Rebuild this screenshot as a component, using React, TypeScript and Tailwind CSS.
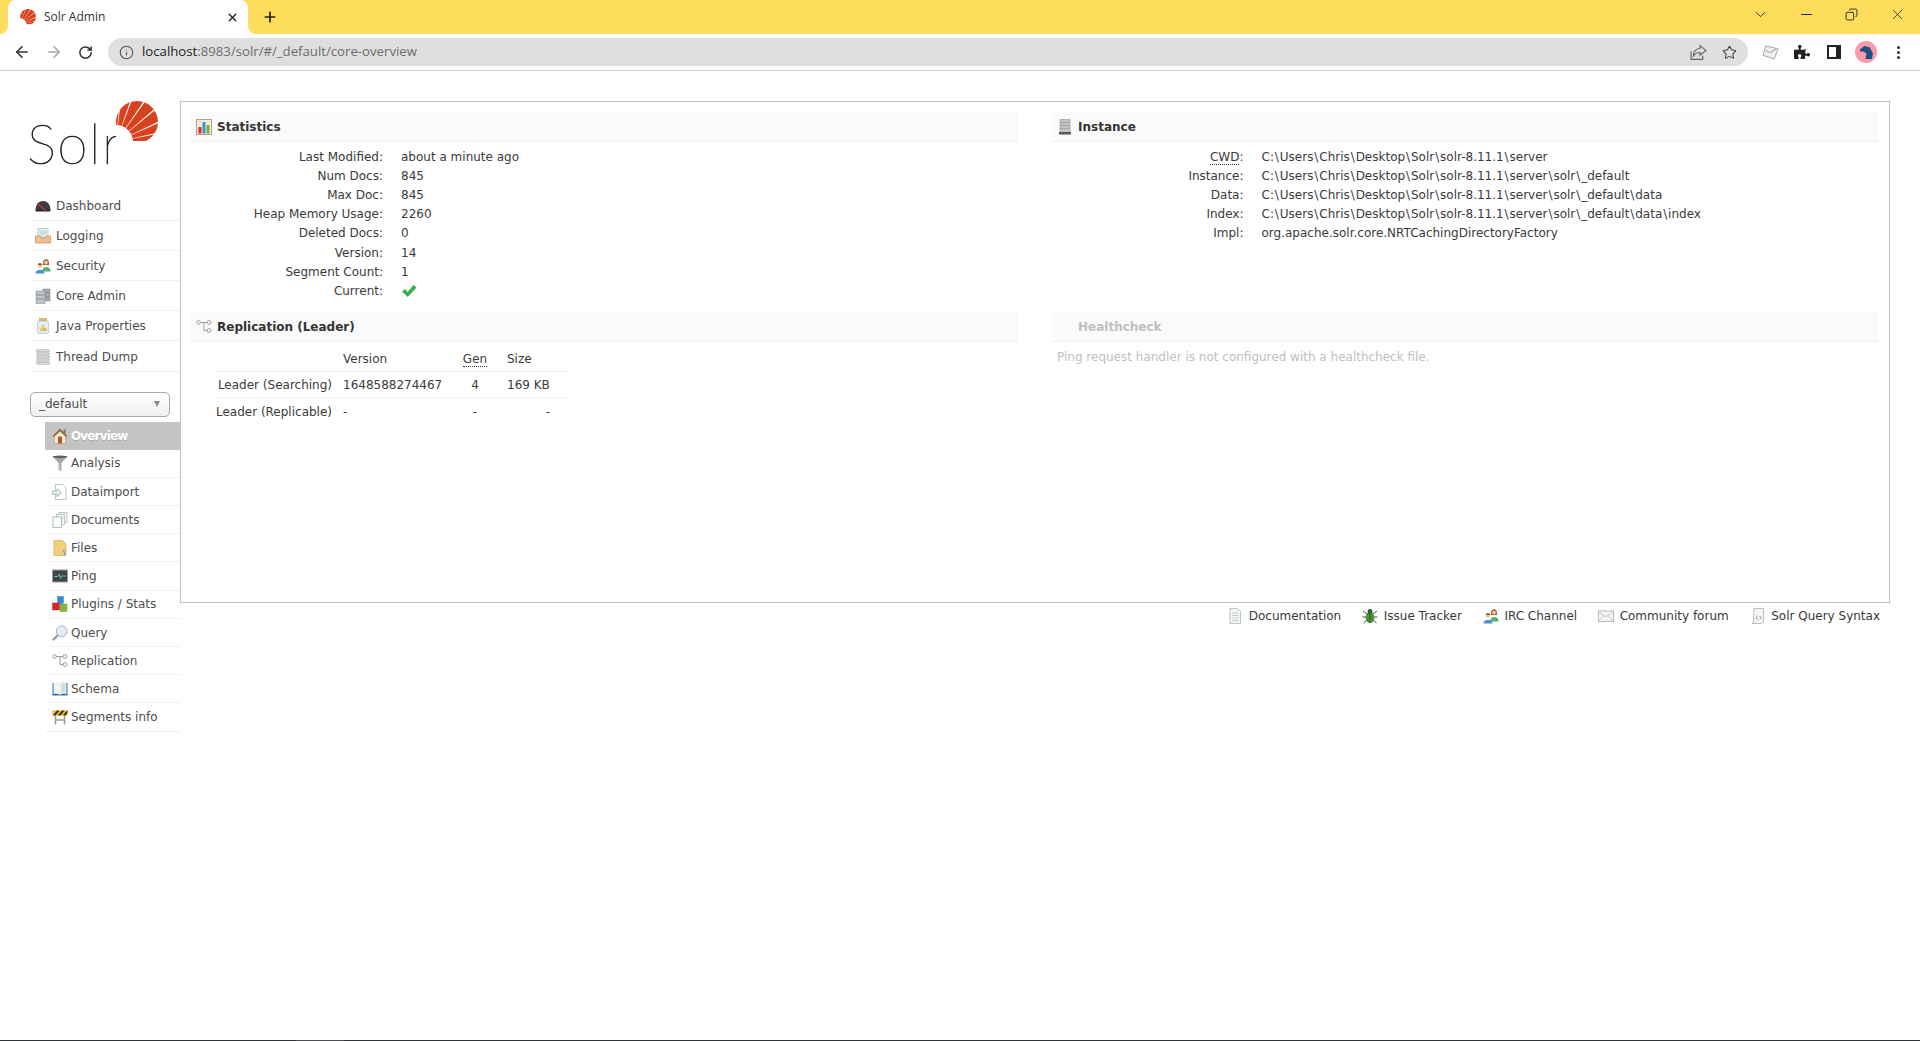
import React from "react";
import { ArrowLeft, ArrowRight, RotateCw, Info, Star, Plus, X, ChevronDown, Minus, Copy } from "lucide-react";
import { FaPuzzlePiece } from "react-icons/fa";

const Svg = ({ children, className = "" }: { children: React.ReactNode; className?: string }) => (
  <svg viewBox="0 0 16 16" width={16} height={16} className={"shrink-0 " + className}>{children}</svg>
);

const rays = (fx: number, fy: number, len: number, angs: number[], w: number) =>
  angs.map((a) => {
    const r1 = ((a - w) * Math.PI) / 180, r2 = ((a + w) * Math.PI) / 180;
    return `${fx},${fy} ${fx + len * Math.cos(r1)},${fy - len * Math.sin(r1)} ${fx + len * Math.cos(r2)},${fy - len * Math.sin(r2)}`;
  });

const Sun = ({ size, className = "" }: { size: number; className?: string }) => (
  <svg viewBox="0 0 42 42" width={size} height={size} className={className}>
    <circle cx="21" cy="21" r="21" fill="#d9411e" />
    <circle cx="0" cy="41" r="17" fill="#fff" />
    <polygon points="-1,0 -1,42 42,42 36,40 0,40 0,14 4,8 0,0" fill="#fff" />
    {rays(0, 41, 70, [84, 70, 55, 40, 25, 12, 1], 0.85).map((p) => (
      <polygon key={p} points={p} fill="#fff" />
    ))}
  </svg>
);

const Dashboard = () => (
  <Svg><path d="M0.5 12.5 C0.5 6 4 3 8 3 S15.5 6 15.5 12.5 Z" fill="#3a3d42" /><rect x="0.5" y="11.5" width="15" height="2" rx="1" fill="#26282b" /><path d="M2.5 5.5 L11 13" stroke="#e02b2b" strokeWidth="1.1" /></Svg>
);
const Logging = () => (
  <Svg>
    <rect x="3" y="0.5" width="10" height="9" fill="#e8f2f2" stroke="#9fb3b5" strokeWidth=".6" />
    <path d="M4.5 3h7M4.5 5h7M4.5 7h5" stroke="#8fbfc4" strokeWidth=".7" />
    <path d="M0.5 8 H5 L6 10 H10 L11 8 H15.5 V15 H0.5 Z" fill="#f2c08f" stroke="#c98a4e" strokeWidth=".7" />
  </Svg>
);
const People = () => (
  <Svg>
    <path d="M8.3 3.5 C8.5 0.5 13.5 0.5 13.7 3.5 L14 7 H8Z" fill="#9a4f24" /><circle cx="11" cy="4.5" r="2" fill="#efc79b" />
    <path d="M7.5 12 C7.5 8 14.5 8 15.5 12 V13.5 H7.5Z" fill="#55b07a" />
    <circle cx="5" cy="7.5" r="2.4" fill="#f0c8a0" /><path d="M2.7 7 C3 4.6 7 4.6 7.3 7Z" fill="#7a5a3a" />
    <path d="M0.5 15.5 C0.5 10.5 9.5 10.5 9.5 15.5Z" fill="#4f8fd0" />
  </Svg>
);
const CoreAdmin = () => (
  <Svg>
    <rect x="8" y="1" width="7" height="12" fill="#a8adb0" stroke="#7c8184" strokeWidth=".5" />
    <rect x="1" y="3" width="9" height="12.5" fill="#c2c6c8" stroke="#7c8184" strokeWidth=".5" />
    <path d="M1 7h9M1 11h9M10 5h5M10 9h5" stroke="#70767a" strokeWidth=".7" />
  </Svg>
);
const Jar = () => (
  <Svg>
    <rect x="4.5" y="0.5" width="7" height="2.5" fill="#e6c268" stroke="#b99440" strokeWidth=".5" />
    <rect x="2.5" y="3" width="11" height="12.5" rx="1.5" fill="#e6eff4" stroke="#a3b7c4" strokeWidth=".6" />
    <circle cx="6.5" cy="11.5" r="2" fill="#e8c272" /><circle cx="9.8" cy="11.5" r="2" fill="#dcb35f" /><circle cx="8" cy="8.8" r="2" fill="#eccd85" />
  </Svg>
);
const ThreadDump = () => (
  <Svg>
    {[0.8, 3.9, 7, 10.1, 13.2].map((y) => <rect key={y} x="1.5" y={y} width="13" height="2" rx="1" fill="#ececec" stroke="#9b9d9d" strokeWidth=".7" />)}
  </Svg>
);
const House = () => (
  <Svg>
    <path d="M8 0.5 L0.5 8 L2 9 L8 3.5 L14 9 L15.5 8 L13.5 6 V1.5 H11.5 V4 Z" fill="#9a6a3a" />
    <path d="M2.5 8.5 L8 3.5 L13.5 8.5 V15.5 H2.5Z" fill="#f6ecd7" stroke="#a98656" strokeWidth=".5" />
    <rect x="6" y="8.5" width="4" height="7" fill="#b45a25" />
  </Svg>
);
const Funnel = () => (
  <Svg><path d="M0.5 1 H15.5 L9.5 8 V15.5 H6.5 V8 Z" fill="#a3a5a7" /><ellipse cx="8" cy="1.8" rx="7.5" ry="1.2" fill="#5c5e60" /><path d="M7.2 8v7" stroke="#dfe1e2" strokeWidth=".9" /></Svg>
);
const DocImport = () => (
  <Svg>
    <path d="M3.5 0.5 H10.5 L14 4 V15.5 H3.5Z" fill="#fff" stroke="#a2b3b0" strokeWidth=".7" />
    <path d="M0.5 7 H5 V4.8 L9.5 8.8 L5 12.8 V10.6 H0.5Z" fill="#e3efe6" stroke="#8fa89b" strokeWidth=".7" />
  </Svg>
);
const Documents = () => (
  <Svg>
    <rect x="7" y="0.5" width="8" height="10" fill="#eef4f4" stroke="#9fb0b2" strokeWidth=".6" />
    <rect x="4.5" y="2.5" width="8" height="10" fill="#f2f7f7" stroke="#9fb0b2" strokeWidth=".6" />
    <rect x="1" y="5" width="8.5" height="10.5" fill="#fff" stroke="#8ba0a3" strokeWidth=".7" />
    <path d="M10.5 4.5h1M10.5 6.5h1" stroke="#aaa" strokeWidth=".6" />
  </Svg>
);
const Files = () => (
  <Svg><path d="M2 0.5 H10.5 L14 4 V15.5 H2Z" fill="#f1cf7c" stroke="#c9a24f" strokeWidth=".6" /><path d="M11.5 10 L13 15" stroke="#5aa3d8" strokeWidth="1.2" /></Svg>
);
const Ping = () => (
  <Svg>
    <rect x="0.5" y="2" width="15" height="12" fill="#3d4347" stroke="#9a9fa2" strokeWidth="1" />
    <path d="M2 8.5 H6 L7 6 L8.5 10.5 L9.5 8 H14" stroke="#5fe3b8" strokeWidth=".8" fill="none" />
  </Svg>
);
const Plugins = () => (
  <Svg>
    <rect x="5.5" y="0.5" width="6" height="7" fill="#2e8fd8" stroke="#1d6ea8" strokeWidth=".4" />
    <rect x="0.5" y="7" width="7" height="7" fill="#d9242b" stroke="#a81b20" strokeWidth=".4" />
    <rect x="8" y="8" width="7" height="7.5" fill="#84b83c" stroke="#64922a" strokeWidth=".4" />
  </Svg>
);
const Query = () => (
  <Svg>
    <path d="M6 10 L1.5 14.5" stroke="#9b9b9b" strokeWidth="2.4" strokeLinecap="round" />
    <circle cx="9.7" cy="6.3" r="5.3" fill="#e4eef6" stroke="#a7b1ba" strokeWidth="1" />
  </Svg>
);
const Replication = () => (
  <Svg>
    <g fill="#fff" stroke="#9a9a9a" strokeWidth="1">
      <path d="M4 3.5 H11" fill="none" /><path d="M8 3.5 V11.5 H11.5" fill="none" />
      <circle cx="2.5" cy="3.5" r="1.8" /><circle cx="13" cy="3.5" r="1.9" /><circle cx="13" cy="11.5" r="1.9" />
    </g>
  </Svg>
);
const Schema = () => (
  <Svg>
    <path d="M0.5 2 V14.5 H15.5 V2" fill="#2d6fb0" />
    <path d="M1.5 1 C4 0.5 7 1 8 2 V14 C7 13 4 12.6 1.5 13Z" fill="#eef5f2" />
    <path d="M14.5 1 C12 0.5 9 1 8 2 V14 C9 13 12 12.6 14.5 13Z" fill="#e2efe9" />
    <path d="M9.5 4h3.5M9.5 6h3.5M9.5 8h3.5M9.5 10h3.5" stroke="#9fc0b4" strokeWidth=".7" />
  </Svg>
);
const Segments = () => (
  <Svg>
    <rect x="0.5" y="1.5" width="15" height="5" fill="#f1b51c" />
    <path d="M1 6.5 L5 1.5 H7.5 L3.5 6.5Z M6 6.5 L10 1.5 H12.5 L8.5 6.5Z M11 6.5 L15 1.5 H15.5 V3.5 L13.5 6.5Z" fill="#2b2b2b" />
    <path d="M3.5 6.5 V15.5 M12.5 6.5 V15.5 M3.5 11h9" stroke="#9a9a8e" strokeWidth="1.5" />
  </Svg>
);
const Chart = () => (
  <Svg>
    <rect x="0.5" y="0.5" width="15" height="15" fill="#f3e9da" stroke="#a48c6d" strokeWidth=".8" />
    <rect x="2.5" y="8" width="3" height="6.5" fill="#dc2a2a" /><rect x="6.5" y="3" width="3" height="11.5" fill="#3a94cf" /><rect x="10.5" y="6" width="3" height="8.5" fill="#75b13a" />
  </Svg>
);
const Tower = () => (
  <Svg>
    <rect x="3" y="0.5" width="10" height="13" fill="#c2c4c5" stroke="#8a8c8d" strokeWidth=".5" />
    <path d="M3 3.5h10M3 6.5h10M3 9.5h10" stroke="#9b9d9e" strokeWidth=".8" />
    <rect x="2" y="13" width="12" height="2.5" fill="#56595a" />
  </Svg>
);
const Check = () => (
  <Svg><path d="M1 8.5 L4 6 L6.5 9 L12.5 2 L15.5 4.5 L6.8 14 Z" fill="#35b144" /></Svg>
);
const Doc = () => (
  <Svg>
    <path d="M3 0.5 H10.5 L13.5 3.5 V15.5 H3Z" fill="#f2f5f5" stroke="#a3aeb0" strokeWidth=".7" />
    <path d="M5 5h6.5M5 7.5h6.5M5 10h6.5M5 12.5h6.5" stroke="#b3bcbe" strokeWidth=".7" />
  </Svg>
);
const Bug = () => (
  <Svg>
    <path d="M1 3 L5 6 M15 3 L11 6 M0.5 9 H4 M15.5 9 H12 M1.5 15 L5 12 M14.5 15 L11 12" stroke="#3c5a30" strokeWidth="1" />
    <ellipse cx="8" cy="9.5" rx="4.3" ry="5.8" fill="#4f8f3a" /><circle cx="8" cy="3.5" r="2.4" fill="#31622a" /><path d="M8 4v11" stroke="#2b5424" strokeWidth=".7" />
  </Svg>
);
const Mail = () => (
  <Svg>
    <rect x="0.5" y="3" width="15" height="10.5" fill="#f3f5f5" stroke="#a6acad" strokeWidth=".8" />
    <path d="M0.5 3.5 L8 9 L15.5 3.5 M0.5 13.5 L6 7.5 M15.5 13.5 L10 7.5" stroke="#b3b8b9" strokeWidth=".7" fill="none" />
  </Svg>
);
const Scroll = () => (
  <Svg>
    <path d="M4 0.5 H13.5 V13 C13.5 14.5 12 15.5 11 15.5 H2 C3 15 3.5 14 3.5 13 Z" fill="#f4f6f6" stroke="#9aa3a4" strokeWidth=".7" />
    <path d="M7.5 8 L5.8 9.7 L7.5 11.4 M9.5 8 L11.2 9.7 L9.5 11.4" stroke="#6f787a" strokeWidth=".8" fill="none" />
  </Svg>
);

const mainNav: [string, React.FC][] = [
  ["Dashboard", Dashboard], ["Logging", Logging], ["Security", People],
  ["Core Admin", CoreAdmin], ["Java Properties", Jar], ["Thread Dump", ThreadDump],
];
const coreNav: [string, React.FC][] = [
  ["Analysis", Funnel], ["Dataimport", DocImport], ["Documents", Documents], ["Files", Files],
  ["Ping", Ping], ["Plugins / Stats", Plugins], ["Query", Query], ["Replication", Replication],
  ["Schema", Schema], ["Segments info", Segments],
];
const stats: [string, React.ReactNode][] = [
  ["Last Modified:", "about a minute ago"], ["Num Docs:", "845"], ["Max Doc:", "845"],
  ["Heap Memory Usage:", "2260"], ["Deleted Docs:", "0"], ["Version:", "14"], ["Segment Count:", "1"],
  ["Current:", <Check />],
];

// The reference font draws the backslash wider than DejaVu does.
const Path = ({ value }: { value: string }) => (
  <>
    {value.split("\\").map((part, i) => (
      <React.Fragment key={i}>
        {i > 0 && <span className="px-[0.92px]">\</span>}
        {part}
      </React.Fragment>
    ))}
  </>
);

const instance: [React.ReactNode, React.ReactNode][] = [
  [<><span className="border-b border-dotted border-[#333]">CWD</span>:</>, <Path value={"C:\\Users\\Chris\\Desktop\\Solr\\solr-8.11.1\\server"} />],
  ["Instance:", <Path value={"C:\\Users\\Chris\\Desktop\\Solr\\solr-8.11.1\\server\\solr\\_default"} />],
  ["Data:", <Path value={"C:\\Users\\Chris\\Desktop\\Solr\\solr-8.11.1\\server\\solr\\_default\\data"} />],
  ["Index:", <Path value={"C:\\Users\\Chris\\Desktop\\Solr\\solr-8.11.1\\server\\solr\\_default\\data\\index"} />],
  ["Impl:", "org.apache.solr.core.NRTCachingDirectoryFactory"],
];
const footer: [string, React.FC][] = [
  ["Documentation", Doc], ["Issue Tracker", Bug], ["IRC Channel", People], ["Community forum", Mail], ["Solr Query Syntax", Scroll],
];

const BlockHead = ({ icon, title, muted }: { icon?: React.ReactNode; title: string; muted?: boolean }) => (
  <div className={"h-[30px] flex items-center gap-[5px] pl-[5px] bg-[#fafafa] border-b border-[#f0f0f0] font-bold text-[12px] " + (muted ? "text-[#c0c0c0]" : "text-[#333]")}>
    <span className="w-[16px] h-[16px] flex shrink-0">{icon}</span>
    <span>{title}</span>
  </div>
);

const KV = ({ label, value, w }: { label: React.ReactNode; value: React.ReactNode; w: string }) => (
  <div className="h-[19.2px] flex items-center">
    <div className={"text-right shrink-0 leading-[15px] " + w}>{label}</div>
    <div className="ml-[18px] leading-[15px]">{value}</div>
  </div>
);

export default function App() {
  return (
    <div className="relative w-[1920px] h-[1041px] overflow-hidden flex flex-col bg-white text-[12px] text-[#3a3a3a] font-['DejaVu_Sans',sans-serif]">
      {/* tab strip */}
      <div className="h-[34px] bg-[#ffdd5c] flex items-center shrink-0 font-['Open_Sans',sans-serif]">
        <div className="relative ml-[8px] w-[240px] h-[34px] bg-white rounded-t-[8px] flex items-center pl-[12px]">
          <svg viewBox="0 0 8 8" width={8} height={8} className="absolute -left-[8px] bottom-0"><path d="M8 0 V8 H0 A8 8 0 0 0 8 0Z" fill="#fff" /></svg>
          <svg viewBox="0 0 8 8" width={8} height={8} className="absolute -right-[8px] bottom-0"><path d="M0 0 V8 H8 A8 8 0 0 1 0 0Z" fill="#fff" /></svg>
          <Sun size={16} />
          <span className="ml-[8px] text-[12px] text-[#333]">Solr Admin</span>
          <X className="ml-auto mr-[9px] text-[#222]" size={13} strokeWidth={2.6} />
        </div>
        <Plus className="ml-[14px] text-[#222]" size={16} strokeWidth={2.6} />
        <div className="ml-auto flex items-center pb-[6px] text-[#222]">
          <ChevronDown size={17} strokeWidth={1.2} />
          <Minus className="ml-[29px]" size={17} strokeWidth={1.5} />
          <Copy className="ml-[30px] -scale-x-100" size={13} strokeWidth={1.7} />
          <X className="ml-[31px] mr-[14px]" size={17} strokeWidth={1.1} />
        </div>
      </div>
      {/* toolbar */}
      <div className="h-[37px] shrink-0 flex items-center border-b border-[#cfcfcf] font-['Open_Sans',sans-serif]">
        <ArrowLeft className="ml-[13px] text-[#333]" size={18} strokeWidth={2.2} />
        <ArrowRight className="ml-[14px] text-[#a8a8a8]" size={18} strokeWidth={2.2} />
        <RotateCw className="ml-[15px] text-[#333]" size={15} strokeWidth={2.4} />
        <div className="ml-[15px] w-[1640px] h-[28px] rounded-full bg-[#dfdfdf] flex items-center pl-[11px] pr-[11px]">
          <Info className="text-[#555]" size={15} strokeWidth={1.8} />
          <span className="ml-[8px] text-[13.2px] text-[#6c6c6c]"><span className="text-[#222]">localhost</span>:8983/solr/#/_default/core-overview</span>
          <svg viewBox="0 0 16 16" width={17} height={17} className="ml-auto text-[#666]" fill="none" stroke="currentColor" strokeWidth="1.1">
            <path d="M1 7 V14.5 H12 V11" /><path d="M9.5 1.5 L15 6 L9.5 10.5 V8 C6 8 4 9.5 3 12 C3 7.5 5.5 4.5 9.5 4Z" />
          </svg>
          <Star className="ml-[15px] text-[#444]" size={15} strokeWidth={1.7} />
        </div>
        <div className="ml-[6px] w-[32px] flex justify-center">
          <svg viewBox="0 0 18 16" width={17} height={15}>
            <path d="M4 1 L17 4 L13 15 L1 11Z" fill="#eef0f0" stroke="#9a9c9c" strokeWidth=".9" /><path d="M4 6 L9 8 L15 4" stroke="#8a8c8c" strokeWidth=".9" fill="none" />
          </svg>
        </div>
        <div className="w-[32px] flex justify-center"><FaPuzzlePiece className="text-[#222]" size={16} /></div>
        <div className="w-[32px] flex justify-center">
          <div className="w-[14px] h-[14px] bg-white border-[2px] border-r-[5px] border-[#222]" />
        </div>
        <div className="w-[32px] flex justify-center">
          <div className="w-[22px] h-[22px] rounded-full bg-[#f99ba8] flex items-center justify-center">
            <svg viewBox="0 0 14 14" width={15} height={15}><path d="M1 4 L5 1 L10 2 L13 8 L12 13 H6 L7 8 L4 6 L1 6Z" fill="#1d4f86" /></svg>
          </div>
        </div>
        <div className="w-[32px] flex flex-col items-center gap-[2px]">
          <span className="w-[3px] h-[3px] rounded-full bg-[#333]" /><span className="w-[3px] h-[3px] rounded-full bg-[#333]" /><span className="w-[3px] h-[3px] rounded-full bg-[#333]" />
        </div>
      </div>
      {/* page */}
      <div className="flex-1 min-h-0 flex pl-[30px] pr-[30px] pt-[30px] border-b border-[#2d3436]">
        <aside className="w-[150px] shrink-0 text-[#4d4d4d]">
          <div className="relative h-[89.5px]">
            <div className="pt-[12px] -ml-[3px] leading-[60px] text-[55px] font-['Lato',sans-serif] font-thin tracking-[1.5px] text-[#27262e] [-webkit-text-stroke:0.7px_#27262e]">Solr</div>
            <Sun size={42} className="absolute left-[86px] top-0" />
          </div>
          <nav>
            {mainNav.map(([name, Icon]) => (
              <div key={name} className="h-[30.2px] flex items-center pl-[5px] pt-[1px] gap-[5px] border-b border-[#f0f0f0]">
                <Icon /><span>{name}</span>
              </div>
            ))}
          </nav>
          <div className="mt-[20px] w-[140px] h-[25px] rounded-[5px] border border-[#a8a8a8] bg-gradient-to-b from-white to-[#efefef] flex items-center pl-[8px] pr-[9px] text-[#4d4d4d]">
            <span>_default</span>
            <span className="ml-auto w-0 h-0 border-l-[3.5px] border-r-[3.5px] border-t-[6px] border-l-transparent border-r-transparent border-t-[#8a8a8a]" />
          </div>
          <nav className="mt-[5px] ml-[15px]">
            <div className="h-[28px] flex items-center pl-[7px] gap-[3px] bg-[#c4c4c4] text-white font-bold [text-shadow:0_1px_#aaa]">
              <House /><span className="tracking-[-0.85px]">Overview</span>
            </div>
            {coreNav.map(([name, Icon]) => (
              <div key={name} className="h-[28.2px] flex items-center pl-[7px] pt-[0.5px] gap-[3px] border-b border-[#f0f0f0]">
                <Icon /><span>{name}</span>
              </div>
            ))}
          </nav>
        </aside>
        <main className="flex-1 min-w-0">
          <section className="h-[502px] border border-[#c0c0c0] pt-[10px] pl-[10px] pr-[9px] grid grid-cols-[827px_827px] gap-x-[34px] grid-rows-[200px_1fr]">
            <div>
              <BlockHead icon={<Chart />} title="Statistics" />
              <div className="pt-[5.5px]">
                {stats.map(([k, v], i) => <KV key={i} label={k} value={v} w="w-[192px]" />)}
              </div>
            </div>
            <div>
              <BlockHead icon={<Tower />} title="Instance" />
              <div className="pt-[5.5px]">
                {instance.map(([k, v], i) => <KV key={i} label={k} value={v} w="w-[191.5px]" />)}
              </div>
            </div>
            <div>
              <BlockHead icon={<Replication />} title="Replication (Leader)" />
              <div className="ml-[25px] w-[353px]">
                <div className="h-[30px] flex items-center pt-[5px] border-b border-[#f0f0f0]">
                  <span className="ml-[127px] w-[115px]">Version</span>
                  <span className="w-[34px] text-center"><span className="border-b border-dotted border-[#333]">Gen</span></span>
                  <span className="ml-[15px]">Size</span>
                </div>
                <div className="h-[26px] flex items-center pt-[1px] border-b border-[#f0f0f0] whitespace-nowrap">
                  <span className="w-[116px] text-right">Leader (Searching)</span>
                  <span className="ml-[11px] w-[115px]">1648588274467</span>
                  <span className="w-[34px] text-center">4</span>
                  <span className="ml-[15px]">169 KB</span>
                </div>
                <div className="h-[26px] flex items-center pt-[1px] whitespace-nowrap">
                  <span className="w-[116px] flex justify-end">Leader (Replicable)</span>
                  <span className="ml-[11px] w-[115px]">-</span>
                  <span className="w-[34px] text-center">-</span>
                  <span className="ml-[15px] w-[43px] text-right">-</span>
                </div>
              </div>
            </div>
            <div>
              <BlockHead title="Healthcheck" muted />
              <p className="mt-[8px] pl-[5px] leading-[15px] text-[#c0c0c0]">Ping request handler is not configured with a healthcheck file.</p>
            </div>
          </section>
          <div className="mt-[3px] pr-[10px] h-[20px] flex items-center justify-end gap-[21px]">
            {footer.map(([name, Icon]) => (
              <div key={name} className="flex items-center gap-[5.5px]"><Icon /><span>{name}</span></div>
            ))}
          </div>
        </main>
      </div>
      <div className="absolute left-[296px] bottom-0 w-[48px] h-px bg-[#4a4e52]" />
    </div>
  );
}
